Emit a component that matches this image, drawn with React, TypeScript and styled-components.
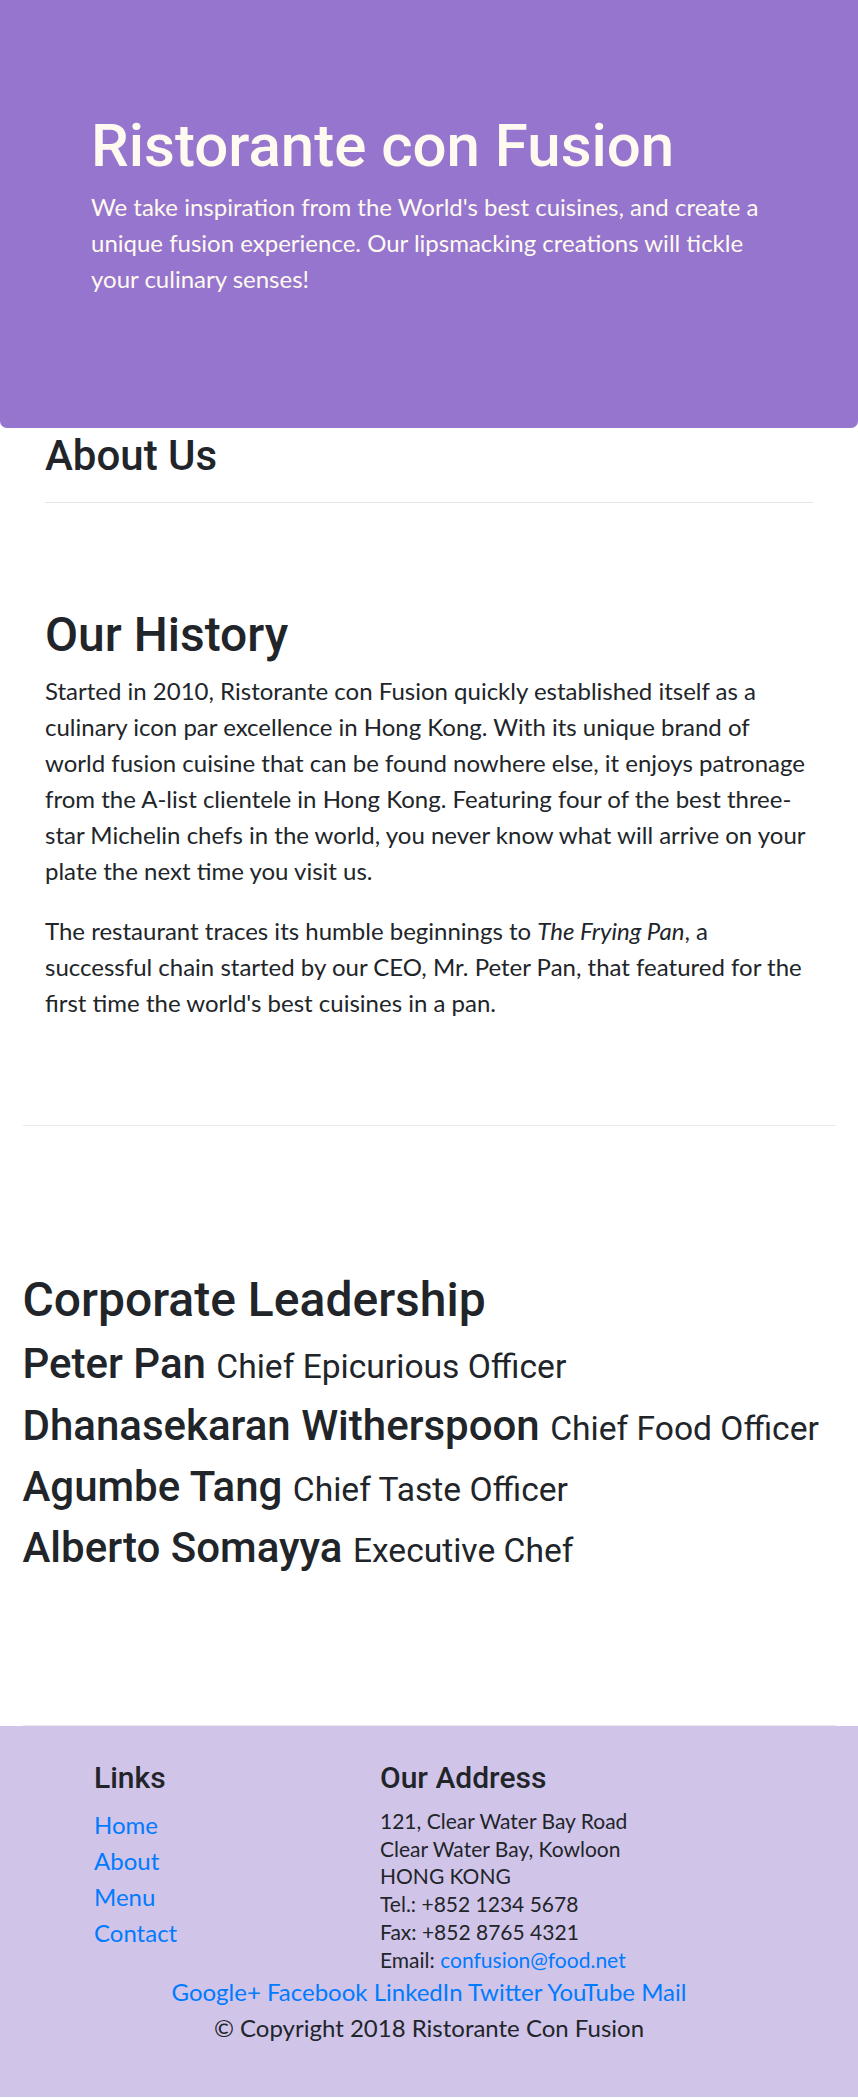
import React from "react";
import styled, { createGlobalStyle } from "styled-components";

const GlobalStyle = createGlobalStyle`
  html, body { margin: 0; padding: 0; background: #ffffff; }
  body {
    font-family: Lato, "Noto Sans", sans-serif;
    color: #212529;
    -webkit-font-smoothing: antialiased;
  }
  * { box-sizing: border-box; }
`;

const Page = styled.div`
  width: 858px;
`;

const Jumbotron = styled.header`
  background: #9575cd;
  color: floralwhite;
  padding: 110px 91px 107px 91px;
  border-radius: 0 0 7px 7px;
`;

const JumboTitle = styled.h1`
  margin: 0 0 7px 0;
  font-family: Roboto, "Noto Sans", sans-serif;
  font-weight: 500;
  font-size: 60px;
  line-height: 72px;
`;

const JumboText = styled.p`
  margin: 0 0 24px 0;
  font-size: 24px;
  line-height: 36px;
  max-width: 676px;
`;

const Container = styled.main`
  padding: 0 22.5px;
`;

const AboutHeader = styled.div`
  padding: 2.5px 22.5px 0 22.5px;
`;

const SectionHeading = styled.h3`
  margin: 0;
  font-family: Roboto, "Noto Sans", sans-serif;
  font-weight: 500;
  font-size: 42px;
  line-height: 50.4px;
`;

const Rule = styled.hr`
  margin: 21px 0 0 0;
  border: 0;
  border-top: 1.5px solid rgba(0, 0, 0, 0.1);
`;

const Section = styled.section<{ $inset: boolean; $top: number; $bottom: number }>`
  padding: ${(p) => p.$top}px ${(p) => (p.$inset ? 22.5 : 0)}px ${(p) => p.$bottom}px;
  border-bottom: 1.5px solid #e9e9e9;
`;

const Title = styled.h2<{ $gap: number }>`
  margin: 0 0 ${(p) => p.$gap}px 0;
  font-family: Roboto, "Noto Sans", sans-serif;
  font-weight: 500;
  font-size: 48px;
  line-height: 57.6px;
`;

const Paragraph = styled.p`
  margin: 0 0 24px 0;
  font-size: 24px;
  line-height: 36px;
  max-width: 768px;
`;

const LeaderName = styled.h3`
  margin: 0 0 11px 0;
  font-family: Roboto, "Noto Sans", sans-serif;
  font-weight: 500;
  font-size: 42px;
  line-height: 50.4px;
  height: 50.4px;
  white-space: nowrap;
`;

const Designation = styled.small`
  font-size: 80%;
  font-weight: 400;
  line-height: 1;
`;

const Footer = styled.footer`
  background: #d1c4e9;
  padding: 34px 22.5px 51px;
`;

const FooterCols = styled.div`
  display: grid;
  grid-template-columns: 286px 1fr;
  padding-left: 71.5px;
`;

const FooterHeading = styled.h5`
  margin: 0 0 11px 0;
  font-family: Roboto, "Noto Sans", sans-serif;
  font-weight: 500;
  font-size: 30px;
  line-height: 36px;
`;

const LinkList = styled.ul`
  list-style: none;
  margin: 0;
  padding: 0;
  font-size: 24px;
  line-height: 36px;
`;

const Link = styled.a`
  color: #007bff;
  text-decoration: none;
`;

const Address = styled.address`
  margin: 0;
  font-style: normal;
  font-size: 21px;
  line-height: 27.8px;
`;

const CenterLine = styled.div`
  text-align: center;
  font-size: 24px;
  line-height: 36px;
`;

const leaders = [
  { name: "Peter Pan", designation: "Chief Epicurious Officer" },
  { name: "Dhanasekaran Witherspoon", designation: "Chief Food Officer" },
  { name: "Agumbe Tang", designation: "Chief Taste Officer" },
  { name: "Alberto Somayya", designation: "Executive Chef" },
];

const socials = ["Google+", "Facebook", "LinkedIn", "Twitter", "YouTube", "Mail"];

export default function App() {
  return (
    <Page>
      <GlobalStyle />
      <Jumbotron>
        <JumboTitle>Ristorante con Fusion</JumboTitle>
        <JumboText>
          We take inspiration from the World's best cuisines, and create a unique fusion
          experience. Our lipsmacking creations will tickle your culinary senses!
        </JumboText>
      </Jumbotron>

      <Container>
        <AboutHeader>
          <SectionHeading>About Us</SectionHeading>
          <Rule />
        </AboutHeader>

        <Section $inset={true} $top={103} $bottom={80.4}>
          <Title $gap={9.5}>Our History</Title>
          <Paragraph>
            Started in 2010, Ristorante con Fusion quickly established itself as a culinary
            icon par excellence in Hong Kong. With its unique brand of world fusion cuisine
            that can be found nowhere else, it enjoys patronage from the A-list clientele in
            Hong Kong. Featuring four of the best three-star Michelin chefs in the world, you
            never know what will arrive on your plate the next time you visit us.
          </Paragraph>
          <Paragraph>
            The restaurant traces its humble beginnings to <em>The Frying Pan</em>, a
            successful chain started by our CEO, Mr. Peter Pan, that featured for the first
            time the world's best cuisines in a pan.
          </Paragraph>
        </Section>

        <Section $inset={false} $top={144.3} $bottom={140}>
          <Title $gap={11}>Corporate Leadership</Title>
          {leaders.map((l) => (
            <LeaderName key={l.name}>
              {l.name} <Designation>{l.designation}</Designation>
            </LeaderName>
          ))}
        </Section>
      </Container>

      <Footer>
        <FooterCols>
          <div>
            <FooterHeading>Links</FooterHeading>
            <LinkList>
              <li><Link href="#">Home</Link></li>
              <li><Link href="#">About</Link></li>
              <li><Link href="#">Menu</Link></li>
              <li><Link href="#">Contact</Link></li>
            </LinkList>
          </div>
          <div>
            <FooterHeading>Our Address</FooterHeading>
            <Address>
              121, Clear Water Bay Road<br />
              Clear Water Bay, Kowloon<br />
              HONG KONG<br />
              Tel.: +852 1234 5678<br />
              Fax: +852 8765 4321<br />
              Email: <Link href="#">confusion@food.net</Link>
            </Address>
          </div>
        </FooterCols>
        <CenterLine>
          {socials.map((s, i) => (
            <React.Fragment key={s}>
              <Link href="#">{s}</Link>
              {i < socials.length - 1 ? " " : ""}
            </React.Fragment>
          ))}
        </CenterLine>
        <CenterLine>© Copyright 2018 Ristorante Con Fusion</CenterLine>
      </Footer>
    </Page>
  );
}
